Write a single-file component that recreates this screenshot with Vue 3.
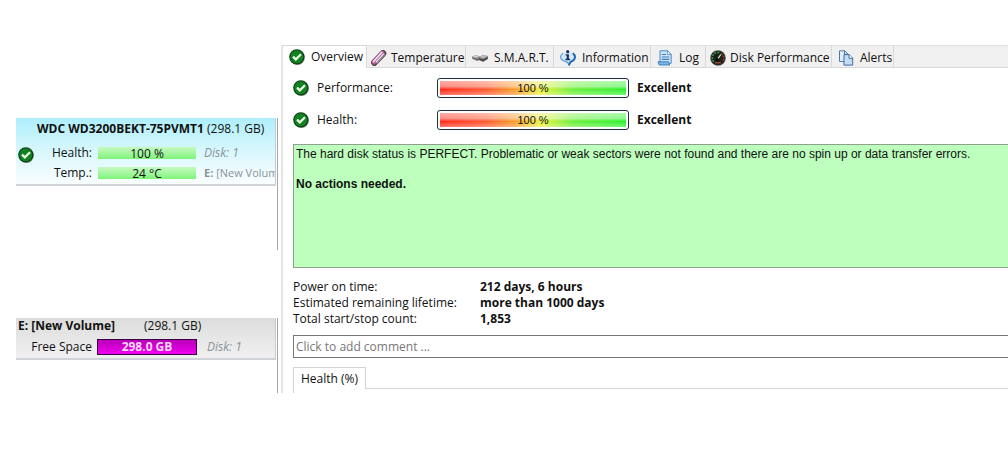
<script setup>
import { ref } from 'vue'

const tabs = [
  { id: 'overview', label: 'Overview' },
  { id: 'temperature', label: 'Temperature' },
  { id: 'smart', label: 'S.M.A.R.T.' },
  { id: 'information', label: 'Information' },
  { id: 'log', label: 'Log' },
  { id: 'performance', label: 'Disk Performance' },
  { id: 'alerts', label: 'Alerts' },
]
const active = ref('overview')
const comment = ref('')

const gauges = [
  { label: 'Performance:', value: 100, verdict: 'Excellent' },
  { label: 'Health:', value: 100, verdict: 'Excellent' },
]
const stats = [
  { label: 'Power on time:', value: '212 days, 6 hours' },
  { label: 'Estimated remaining lifetime:', value: 'more than 1000 days' },
  { label: 'Total start/stop count:', value: '1,853' },
]
</script>

<template>
  <svg class="defs" aria-hidden="true">
    <symbol id="ok" viewBox="0 0 16 16">
      <circle cx="8.5" cy="8.5" r="7.5" fill="#8b938b" />
      <circle cx="7.8" cy="7.8" r="7.6" fill="#0b3f12" />
      <circle cx="7.8" cy="7.8" r="6.5" fill="#148024" />
      <path d="M4 7.6 6.8 10.4 12 5.2" fill="none" stroke="#e9ffdf" stroke-width="2.2" />
    </symbol>
  </svg>

  <div class="app">
    <aside class="sidebar">
      <div class="disks">
        <section class="card disk">
          <h2 class="disk-title"><b>WDC WD3200BEKT-75PVMT1</b> (298.1 GB)</h2>
          <div class="disk-body">
            <svg class="icon"><use href="#ok" /></svg>
            <div class="disk-rows">
              <span class="label">Health:</span>
              <span class="bar">100 %</span>
              <i class="muted">Disk: 1</i>
              <span class="label">Temp.:</span>
              <span class="bar">24 °C</span>
              <span class="muted mounted"><b>E:</b> [New Volume]</span>
            </div>
          </div>
        </section>
      </div>
      <div class="volumes">
        <section class="card volume">
          <h2 class="volume-title"><b>E: [New Volume]</b><span>(298.1 GB)</span></h2>
          <div class="volume-row">
            <span class="label">Free Space</span>
            <span class="space">298.0 GB</span>
            <i class="muted">Disk: 1</i>
          </div>
        </section>
      </div>
    </aside>

    <main class="panel">
      <nav class="tabs" role="tablist">
        <button
          v-for="t in tabs"
          :key="t.id"
          type="button"
          role="tab"
          class="tab"
          :class="[t.id, { active: active === t.id }]"
          :aria-selected="active === t.id"
          @click="active = t.id"
        >
          <svg v-if="t.id === 'overview'" class="icon"><use href="#ok" /></svg>
          <svg v-else-if="t.id === 'temperature'" class="icon" viewBox="0 0 16 16">
            <path d="M3.4 12.6 12 3.4" stroke="#4b3a47" stroke-width="6.6" stroke-linecap="round" />
            <path d="M3 12.3 11.5 3" stroke="#b65b98" stroke-width="4.4" stroke-linecap="round" />
            <path d="M2.4 11.6 10.8 2.4" stroke="#f5dcec" stroke-width="1.6" stroke-linecap="round" />
            <path d="M5.2 12 12.6 3.9" stroke="#ececec" stroke-width="1.2" stroke-linecap="round" />
            <path d="M6 13.2 14 4.4" stroke="#8d8d8d" stroke-width="1.2" stroke-linecap="round" />
          </svg>
          <svg v-else-if="t.id === 'smart'" class="icon" viewBox="0 0 16 16">
            <path d="M0 6.5 4 5l4 1.4 3-1.7 5 1.2v3L11 12l-3-1.8-3 .7-5-2.2z" fill="#8b8b8b" />
            <path d="M.5 6.5 4 5.2l3.2 1.1L4 7.8z" fill="#d2d2d2" />
            <path d="m7.5 7 3.6-2 4.4 1-4 2z" fill="#c0c0c0" />
            <path d="m7 8 4.2 1.4L15.6 7v1.8L11 11.6 7 9.8z" fill="#454545" />
            <path d="m1 8 4 1.8 2-1" fill="none" stroke="#666" />
          </svg>
          <svg v-else-if="t.id === 'information'" class="icon" viewBox="0 0 16 16">
            <path d="M3.4 2.6C-1 5-.4 10.2 5 11.7c2 .5 3.4 1.1 4 3.8.4-1.8.9-2.9 2-3.8 5.2-1.8 5.8-6.5 1.4-9.1z" fill="#d3e6f6" />
            <path d="M3 3.2C-.8 5.7 0 10 5 11.4c2.2.5 3.6 1.3 4 4" fill="none" stroke="#6aa6d8" stroke-width="1.3" />
            <path d="M12.8 3.2c3.6 2.7 2.6 7-1.8 8.4-1.2.8-1.7 2-2 3.8" fill="none" stroke="#1d66ae" stroke-width="1.9" />
            <circle cx="7.7" cy="1.7" r="1.6" fill="#12335c" />
            <path d="M5.6 4.2h3.3v4.6h1.2v1.4H5.4V8.8h1.3V5.5H5.6z" fill="#12335c" />
          </svg>
          <svg v-else-if="t.id === 'log'" class="icon" viewBox="0 0 16 16">
            <path d="M3 .8h7.5l3.7 3.7v8.8H3z" fill="#cbe5fa" stroke="#4f8bc2" />
            <path d="M10.5.8v3.7h3.7z" fill="#fff" stroke="#4f8bc2" stroke-width=".8" />
            <path d="M4.8 4.5H9M4.8 7h7.5M4.8 9.4h7.5" stroke="#3e7db8" stroke-width="1.2" />
            <path d="M1 11.8h10.5l1.2 3.2H2.2z" fill="#7db8ea" stroke="#2a6ca9" stroke-width=".8" />
          </svg>
          <svg v-else-if="t.id === 'performance'" class="icon" viewBox="0 0 16 16">
            <circle cx="8" cy="8" r="7.8" fill="#555" />
            <circle cx="8" cy="8" r="7" fill="#182219" />
            <path d="M3.8 11.8A5.6 5.6 0 0 1 10 2.8" fill="none" stroke="#3f9b4c" stroke-width="1.5" stroke-dasharray="2 1" />
            <path d="M11 3.3a5.6 5.6 0 0 1 1.5 8.2" fill="none" stroke="#9b3930" stroke-width="1.5" stroke-dasharray="2 1" />
            <path d="m7 10 3.8-5.5" stroke="#f3eedc" stroke-width="1.3" />
            <circle cx="7.3" cy="9.6" r="1.6" fill="#080808" />
            <path d="M5 12.8h6" stroke="#bd4d42" stroke-width="1.2" />
          </svg>
          <svg v-else class="icon" viewBox="0 0 16 16">
            <path d="M1.5.8h5.3l3 3v7.7H1.5z" fill="#e0edf9" stroke="#517aa5" />
            <path d="M6.5.8v3.4h3.3" fill="none" stroke="#517aa5" />
            <path d="M6 4.6h5.2l3.5 3.5v7H6z" fill="#c4ddf4" stroke="#3f6c9c" />
            <path d="M11 4.6v3.7h3.7" fill="#fff" stroke="#3f6c9c" />
          </svg>
          <span>{{ t.label }}</span>
        </button>
      </nav>

      <div class="content">
        <div class="gauges">
          <div v-for="g in gauges" :key="g.label" class="gauge-row">
            <svg class="icon"><use href="#ok" /></svg>
            <span class="gauge-label">{{ g.label }}</span>
            <div class="gauge"><div class="gauge-fill">{{ g.value }} %</div></div>
            <b>{{ g.verdict }}</b>
          </div>
        </div>

        <div class="message">
          <p>The hard disk status is PERFECT. Problematic or weak sectors were not found and there are no spin up or data transfer errors.</p>
          <p><b>No actions needed.</b></p>
        </div>

        <dl class="stats">
          <template v-for="s in stats" :key="s.label">
            <dt>{{ s.label }}</dt>
            <dd>{{ s.value }}</dd>
          </template>
        </dl>

        <input v-model="comment" class="comment" type="text" aria-label="Comment" placeholder="Click to add comment ..." />

        <div class="chart-tabs" role="tablist">
          <button type="button" role="tab" class="chart-tab" aria-selected="true">Health (%)</button>
        </div>
      </div>
    </main>
  </div>
</template>

<style>
body {
  background: #fff;
}
</style>

<style scoped>
.defs {
  position: absolute;
  width: 0;
  height: 0;
}
.app {
  display: grid;
  grid-template-columns: 262px 1fr;
  column-gap: 3px;
  padding: 45px 0 0 16px;
  font: 12px/16px "Open Sans", "Noto Sans", sans-serif;
  color: #111;
  white-space: nowrap;
}
.icon {
  width: 16px;
  height: 16px;
  flex: none;
}
.sidebar {
  display: flex;
  flex-direction: column;
  justify-content: space-between;
  padding-top: 73px;
}
.disks,
.volumes {
  border-right: 1px solid #a6a6a6;
  padding-right: 1px;
}
.disks {
  height: 132px;
}
.volumes {
  height: 75px;
}
.card {
  overflow: hidden;
  border-right: 1px solid #c3ccd2;
  border-bottom: 2px solid #cfd3d8;
}
.disk {
  padding: 3px 0 3px 2px;
  background: linear-gradient(#aeeefc, #d8f7fd 50%, #fafeff);
}
h2 {
  margin: 0;
  font-size: 12px;
  font-weight: 400;
}
.disk-title {
  padding-left: 19px;
}
.disk-body {
  display: flex;
  align-items: center;
  padding-top: 8px;
}
.disk-body .icon {
  margin-bottom: 16px;
}
.disk-rows {
  display: grid;
  grid-template-columns: 58px 98px auto;
  column-gap: 6px;
  row-gap: 4px;
  align-items: center;
}
.label {
  text-align: right;
}
.bar {
  height: 12px;
  line-height: 14px;
  text-align: center;
  background: linear-gradient(#c4f8c0, #a5f7a0 50%, #7df478);
}
.muted {
  padding-left: 2px;
  color: #8b939a;
}
.mounted {
  font-size: 11px;
}
.volume {
  padding: 0 0 3px 2px;
  background: linear-gradient(#dcdcdc, #f0f0f0);
}
.volume-title {
  display: grid;
  grid-template-columns: 126px auto;
}
.volume-row {
  display: grid;
  grid-template-columns: 74px 100px auto;
  column-gap: 5px;
  align-items: center;
  padding-top: 5px;
}
.volume-row .muted {
  padding-left: 5px;
}
.space {
  border: 1px solid #3a0040;
  line-height: 14px;
  text-align: center;
  font-weight: 700;
  color: #fbd9fb;
  background: linear-gradient(#b800b8, #f000f0);
}
.panel {
  min-width: 0;
  border-left: 2px solid #e4e4e4;
  overflow: hidden;
}
.tabs {
  display: grid;
  grid-template-columns: 84px 99px 88px 97px 55px 126px 62px;
  height: 23px;
  background: #f0f0f0;
  box-shadow: inset 0 1px #e2e2e2, inset 0 -1px #d9d9d9;
}
button {
  font: inherit;
  color: inherit;
}
.tab {
  display: flex;
  align-items: center;
  gap: 6px;
  padding: 2px 0 0 6px;
  border: 0;
  border-right: 1px solid #d9d9d9;
  background: none;
}
.tab.temperature,
.tab.performance {
  gap: 4px;
  padding-left: 4px;
}
.tab.active {
  padding-bottom: 3px;
  background: #fff;
  border-top: 1px solid #d9d9d9;
}
.content {
  padding: 10px 0 0 10px;
}
.gauges {
  display: grid;
  row-gap: 12px;
}
.gauge-row {
  display: grid;
  grid-template-columns: 16px 112px 192px auto;
  column-gap: 8px;
  align-items: center;
}
.gauge {
  box-sizing: border-box;
  height: 20px;
  padding: 2px;
  border: 1px solid #1c2a44;
  border-radius: 3px;
}
.gauge-fill {
  height: 14px;
  font: 11px/14px "Liberation Sans", Arial, sans-serif;
  text-align: center;
  background:
    linear-gradient(rgba(255, 255, 255, 0.6), rgba(255, 255, 255, 0.45) 40%, rgba(255, 255, 255, 0) 60%, rgba(255, 255, 255, 0.35)),
    linear-gradient(90deg, #ff2a20, #ff5a30 25%, #f8a52c 42%, #eaf23c 54%, #6cf03c 72%, #2cf030);
}
.message {
  height: 118px;
  margin-top: 14px;
  padding: 2px 2px;
  border: 1px solid #8fa08f;
  border-right: 0;
  background: #bdffbd;
  font: 12px/15px "Liberation Sans", Arial, sans-serif;
}
.message p {
  margin: 0 0 15px;
}
.stats {
  display: grid;
  grid-template-columns: 187px auto;
  margin: 11px 0 8px;
}
.stats dd {
  margin: 0;
  font-weight: 700;
}
.comment {
  display: block;
  box-sizing: border-box;
  width: 100%;
  height: 23px;
  padding: 0 2px;
  border: 1px solid #777;
  border-right: 0;
  border-radius: 0;
  font: inherit;
  outline: 0;
}
.comment::placeholder {
  color: #777;
  opacity: 1;
}
.chart-tabs {
  display: flex;
  height: 26px;
  margin-top: 9px;
  border-left: 1px solid #d4d4d4;
}
.chart-tabs::after {
  content: "";
  flex: 1;
  height: 21px;
  border-bottom: 1px solid #d4d4d4;
}
.chart-tab {
  height: 22px;
  padding: 0 7px;
  border: 1px solid #d4d4d4;
  border-width: 1px 1px 0 0;
  background: #fff;
}
</style>
